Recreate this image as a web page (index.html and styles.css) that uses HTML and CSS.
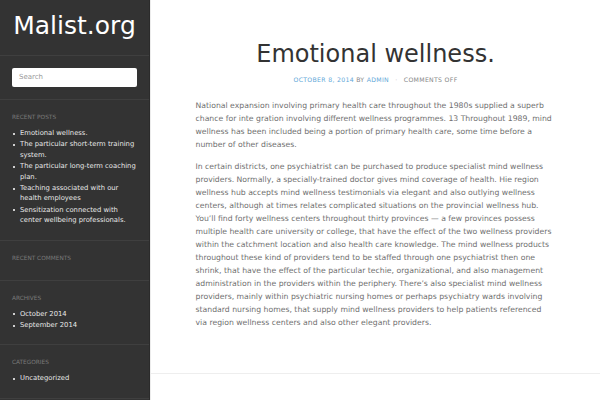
FILE: index.html
```html
<!DOCTYPE html>
<html>
<head>
<meta charset="utf-8">
<link rel="stylesheet" href="styles.css">
</head>
<body>
<div class="page">
  <aside class="sidebar">
    <header class="brand"><h1 class="site-title">Malist.org</h1></header>
    <div class="search-wrap"><div class="search">Search</div></div>
    <section class="widget">
      <h3 class="widget-title">Recent Posts</h3>
      <ul class="widget-list">
        <li>Emotional wellness.</li>
        <li>The particular short-term training system.</li>
        <li>The particular long-term coaching plan.</li>
        <li>Teaching associated with our health employees</li>
        <li>Sensitization connected with center wellbeing professionals.</li>
      </ul>
    </section>
    <section class="widget">
      <h3 class="widget-title empty">Recent Comments</h3>
    </section>
    <section class="widget">
      <h3 class="widget-title">Archives</h3>
      <ul class="widget-list">
        <li>October 2014</li>
        <li>September 2014</li>
      </ul>
    </section>
    <section class="widget">
      <h3 class="widget-title">Categories</h3>
      <ul class="widget-list">
        <li>Uncategorized</li>
      </ul>
    </section>
  </aside>
  <main class="main">
    <article class="post">
      <h2 class="post-title">Emotional wellness.</h2>
      <div class="meta"><span class="link">October 8, 2014</span> by <span class="link">admin</span> <span class="dot">·</span> Comments Off</div>
      <div class="content">
        <p>National expansion involving primary health care throughout the 1980s supplied a superb chance for inte gration involving different wellness programmes. 13 Throughout 1989, mind wellness has been included being a portion of primary health care, some time before a number of other diseases.</p>
        <p>In certain districts, one psychiatrist can be purchased to produce specialist mind wellness providers. Normally, a specially-trained doctor gives mind coverage of health. Hie region wellness hub accepts mind wellness testimonials via elegant and also outlying wellness centers, although at times relates complicated situations on the provincial wellness hub. You’ll find forty wellness centers throughout thirty provinces — a few provinces possess multiple health care university or college, that have the effect of the two wellness providers within the catchment location and also health care knowledge. The mind wellness products throughout these kind of providers tend to be staffed through one psychiatrist then one shrink, that have the effect of the particular techie, organizational, and also management administration in the providers within the periphery. There’s also specialist mind wellness providers, mainly within psychiatric nursing homes or perhaps psychiatry wards involving standard nursing homes, that supply mind wellness providers to help patients referenced via region wellness centers and also other elegant providers.</p>
      </div>
    </article>
  </main>
</div>
</body>
</html>
```
FILE: styles.css
```css
* { box-sizing: border-box; }
html, body { margin: 0; padding: 0; }
body {
  font-family: "DejaVu Sans", sans-serif;
  background: #fff;
  width: 600px;
  height: 400px;
  overflow: hidden;
}
.page { display: flex; height: 400px; }
.sidebar {
  width: 150px;
  flex: none;
  background: #333333;
  border-right: 1px solid #2b2b2b;
  color: #e6e6e6;
}
.brand {
  height: 56px;
  border-bottom: 1px solid #3f3f3f;
  display: flex;
  justify-content: center;
}
.site-title {
  margin: 0;
  padding-top: 11px;
  font-weight: normal;
  font-size: 25px;
  line-height: 30px;
  color: #fff;
}
.search-wrap {
  padding: 12px 12px 12px;
  border-bottom: 1px solid #3f3f3f;
}
.search {
  height: 19px;
  background: #fff;
  border-radius: 2px;
  color: #999;
  font-size: 7px;
  line-height: 19px;
  padding-left: 7px;
}
.widget {
  padding: 13px 12px 13px;
  border-bottom: 1px solid #3f3f3f;
}
.widget-title {
  margin: 0 0 7px;
  font-weight: normal;
  text-transform: uppercase;
  font-size: 5.8px;
  line-height: 8px;
  color: #7a7a7a;
}
.widget-title.empty { margin-bottom: 5px; }
.widget-list {
  margin: 0;
  padding: 0 0 0 8px;
  list-style: none;
}
.widget-list li {
  position: relative;
  font-size: 6.8px;
  line-height: 10.4px;
  margin-bottom: 1px;
  color: #e8e8e8;
}
.widget-list li::before {
  content: "";
  position: absolute;
  left: -7px;
  top: 4.5px;
  width: 2px;
  height: 2px;
  background: #cfcfcf;
}
.main {
  flex: 1;
  border-left: 1px solid #ececec;
}
.post {
  padding-top: 40px;
  height: 374px;
  border-bottom: 1px solid #eeeeee;
}
.post-title {
  margin: 0;
  text-align: center;
  font-weight: normal;
  font-size: 24px;
  line-height: 29px;
  color: #333;
}
.meta {
  margin-top: 6px;
  text-align: center;
  font-size: 6.2px;
  line-height: 10px;
  text-transform: uppercase;
  letter-spacing: 0.3px;
  color: #888;
}
.meta .link { color: #5fa8d8; }
.meta .dot { color: #bbb; margin: 0 4px; }
.content {
  width: 360px;
  padding-right: 2.5px;
  margin: 14px auto 0;
  color: #707070;
  font-size: 7.72px;
  line-height: 13px;
}
.content p { margin: 0 0 9px; }
```
